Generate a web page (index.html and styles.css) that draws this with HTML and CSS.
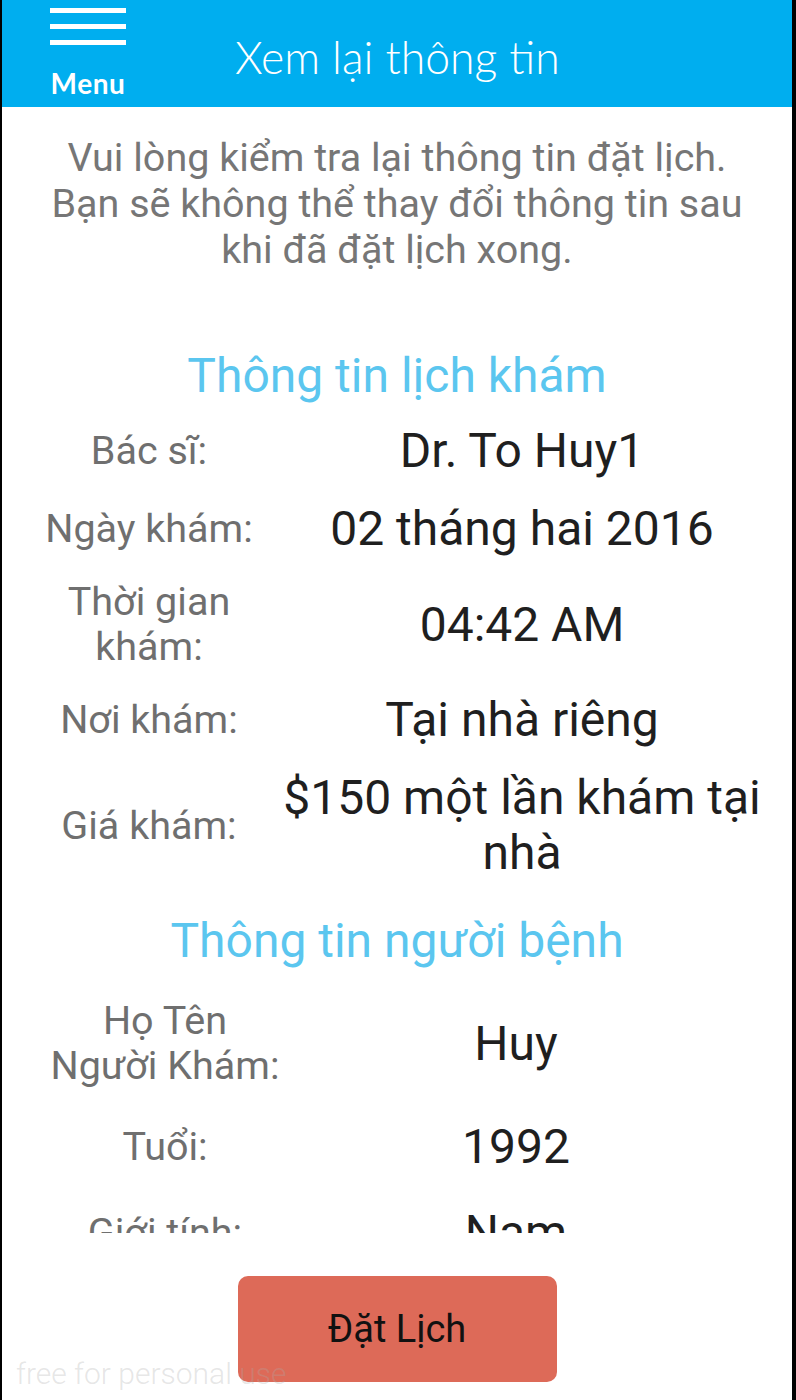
FILE: index.html
```html
<!DOCTYPE html>
<html lang="vi">
<head>
<meta charset="utf-8">
<title>Xem lại thông tin</title>
<link rel="stylesheet" href="styles.css">
</head>
<body>
<div class="app">
  <header class="topbar">
    <div class="menu">
      <span class="bar"></span>
      <span class="bar"></span>
      <span class="bar"></span>
      <span class="menu-label">Menu</span>
    </div>
    <div class="title">Xem lại thông tin</div>
  </header>

  <main class="scroll">
    <p class="intro">Vui lòng kiểm tra lại thông tin đặt lịch. Bạn sẽ không thể thay đổi thông tin sau khi đã đặt lịch xong.</p>

    <h2 class="section-title first">Thông tin lịch khám</h2>
    <div class="rows sec1">
      <div class="row"><div class="label">Bác sĩ:</div><div class="value">Dr. To Huy1</div></div>
      <div class="row"><div class="label">Ngày khám:</div><div class="value">02 tháng hai 2016</div></div>
      <div class="row"><div class="label">Thời gian khám:</div><div class="value">04:42 AM</div></div>
      <div class="row"><div class="label">Nơi khám:</div><div class="value">Tại nhà riêng</div></div>
      <div class="row"><div class="label">Giá khám:</div><div class="value">$150 một lần khám tại nhà</div></div>
    </div>

    <h2 class="section-title second">Thông tin người bệnh</h2>
    <div class="rows sec2">
      <div class="row"><div class="label">Họ Tên<br>Người Khám:</div><div class="value">Huy</div></div>
      <div class="row"><div class="label">Tuổi:</div><div class="value">1992</div></div>
      <div class="row"><div class="label">Giới tính:</div><div class="value">Nam</div></div>
    </div>
  </main>

  <footer class="actions">
    <button class="book-btn" type="button">Đặt Lịch</button>
  </footer>

  <div class="watermark">free for personal use</div>
</div>
</body>
</html>
```

FILE: styles.css
```css
* { box-sizing: border-box; }

html, body {
  margin: 0;
  padding: 0;
  background: #000;
}

.app {
  position: relative;
  width: 796px;
  height: 1400px;
  border-left: 2px solid #000;
  border-right: 4px solid #000;
  background: #fff;
  display: flex;
  flex-direction: column;
  overflow: hidden;
  font-family: Roboto, "Liberation Sans", sans-serif;
}

/* ---------- header ---------- */
.topbar {
  flex: none;
  height: 107px;
  background: #00aeef;
  display: flex;
  align-items: flex-start;
  padding-left: 48px;
}

.menu {
  width: 76px;
  padding-top: 8px;
  display: flex;
  flex-direction: column;
  align-items: center;
}

.bar {
  display: block;
  width: 76px;
  height: 5px;
  background: #fff;
  margin-bottom: 11px;
}

.menu-label {
  margin-top: 11px;
  font-family: Lato, "Open Sans", sans-serif;
  font-weight: 700;
  font-size: 28px;
  line-height: 32px;
  color: #fff;
  letter-spacing: 0.6px;
}

.title {
  margin-left: 109px;
  margin-top: 35px;
  font-family: Lato, "Open Sans", sans-serif;
  font-weight: 300;
  font-size: 44.5px;
  line-height: 44px;
  color: #fff;
  white-space: nowrap;
}

/* ---------- content ---------- */
.scroll {
  flex: none;
  height: 1126px;
  overflow: hidden;
}

.intro {
  margin: 0;
  padding: 28px 44px 0;
  font-size: 39.5px;
  line-height: 46px;
  color: #767676;
  text-align: center;
}

.section-title {
  margin: 0;
  font-weight: 400;
  font-size: 48px;
  line-height: 58px;
  color: #5bc6ef;
  text-align: center;
}

.section-title.first { margin-top: 74px; }
.section-title.second { margin-top: 32px; }

.rows {
  display: flex;
  flex-direction: column;
}

.sec1 {
  padding-top: 18px;
  padding-left: 17px;
  gap: 23px;
}

.sec2 {
  padding-top: 28px;
  padding-left: 31px;
  gap: 31px;
}

.row {
  display: grid;
  align-items: center;
}

.sec1 .row { grid-template-columns: 260px 486px; }
.sec2 .row { grid-template-columns: 264px 438px; }

.label {
  font-size: 39.5px;
  line-height: 45px;
  color: #6f6f6f;
  text-align: center;
}

.value {
  font-size: 48px;
  line-height: 55px;
  color: #1f1f1f;
  text-align: center;
}

/* ---------- footer ---------- */
.actions {
  flex: 1;
  display: flex;
  justify-content: center;
  align-items: flex-start;
  padding-top: 43px;
}

.book-btn {
  width: 319px;
  height: 106px;
  border: none;
  border-radius: 10px;
  background: #dd6a58;
  color: #111;
  font-family: Roboto, "Liberation Sans", sans-serif;
  font-size: 38px;
  padding: 0;
}

.watermark {
  position: absolute;
  left: 14px;
  top: 1356px;
  font-family: Roboto, "Liberation Sans", sans-serif;
  font-weight: 300;
  font-size: 30px;
  line-height: 36px;
  color: rgba(170, 170, 170, 0.3);
  white-space: nowrap;
  pointer-events: none;
}
```
